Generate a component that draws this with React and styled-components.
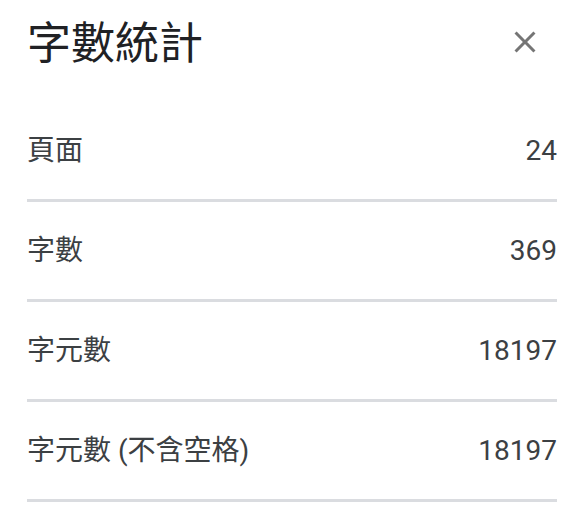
import React from "react";
import styled, { createGlobalStyle } from "styled-components";

const GlobalStyle = createGlobalStyle`
  body {
    margin: 0;
    background: #ffffff;
    font-family: Roboto, "Noto Sans CJK TC", sans-serif;
  }
`;

const Panel = styled.div`
  width: 584px;
  padding: 0 27px;
  box-sizing: border-box;
`;

const Header = styled.div`
  display: flex;
  align-items: center;
  justify-content: space-between;
  height: 87px;
  margin-bottom: 15px;
`;

const Title = styled.h1`
  margin: 0;
  font-size: 44px;
  font-weight: 400;
  line-height: 1;
  color: #202124;
`;

const CloseButton = styled.button`
  display: flex;
  align-items: center;
  justify-content: center;
  width: 36px;
  height: 36px;
  margin: -4px 14px 0 0;
  padding: 0;
  border: none;
  background: none;
  cursor: pointer;
`;

const Row = styled.div`
  display: flex;
  align-items: center;
  justify-content: space-between;
  height: 97px;
  border-bottom: 3px solid #dadce0;
  font-size: 28px;
  line-height: 1;
  color: #3c4043;
`;

const Value = styled.span`
  color: #3c4043;
`;

const stats = [
  { label: "頁面", value: "24" },
  { label: "字數", value: "369" },
  { label: "字元數", value: "18197" },
  { label: "字元數 (不含空格)", value: "18197" },
];

const App = () => {
  return (
    <Panel>
      <GlobalStyle />
      <Header>
        <Title>字數統計</Title>
        <CloseButton aria-label="關閉">
          <svg width="36" height="36" viewBox="0 0 24 24">
            <path
              fill="#757575"
              d="M19 6.41L17.59 5 12 10.59 6.41 5 5 6.41 10.59 12 5 17.59 6.41 19 12 13.41 17.59 19 19 17.59 13.41 12z"
            />
          </svg>
        </CloseButton>
      </Header>
      {stats.map((s, i) => (
        <Row key={i}>
          <span>{s.label}</span>
          <Value>{s.value}</Value>
        </Row>
      ))}
    </Panel>
  );
};

export default App;
